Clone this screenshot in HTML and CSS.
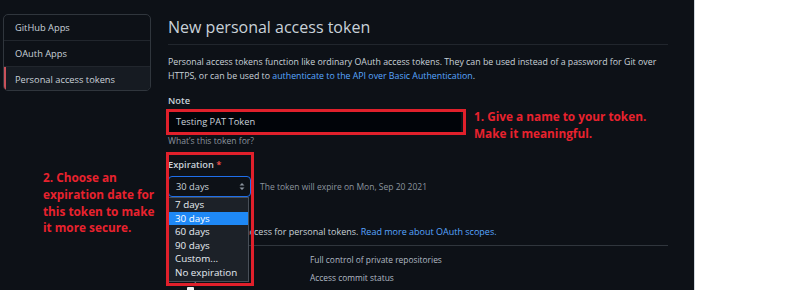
FILE: index.html
```html
<!DOCTYPE html>
<html lang="en">
<head>
  <meta charset="UTF-8" />
  <title>New personal access token</title>
  <link rel="stylesheet" href="styles.css">
</head>
<body>
  <div class="screen">
    <div class="layout">
      <nav class="menu">
        <a class="menu-item">GitHub Apps</a>
        <a class="menu-item">OAuth Apps</a>
        <a class="menu-item selected">Personal access tokens</a>
      </nav>

      <main class="content">
        <h1 class="title">New personal access token</h1>
        <p class="intro">
          Personal access tokens function like ordinary OAuth access tokens. They can be used instead of a password for Git over
          HTTPS, or can be used to <a href="#">authenticate to the API over Basic Authentication</a>.
        </p>

        <label class="field-label">Note</label>
        <div class="text-input">Testing PAT Token</div>
        <p class="hint">What’s this token for?</p>

        <label class="field-label expiration-label">Expiration <span class="required">*</span></label>
        <div class="expiry-row">
          <div class="select">
            <span>30 days</span>
            <svg class="select-arrow" width="6" height="9" viewBox="0 0 6 9">
              <path d="M0.5 3.5 L3 1 L5.5 3.5 Z M0.5 5.5 L3 8 L5.5 5.5 Z" fill="#8b949e"/>
            </svg>
          </div>
          <span class="expiry-note">The token will expire on Mon, Sep 20 2021</span>
        </div>

        <p class="scopes-intro">
          Scopes define the access for personal tokens. <a href="#">Read more about OAuth scopes.</a>
        </p>
        <div class="scopes">
          <div class="scope-row">
            <span class="scope-name">repo</span>
            <span class="scope-desc">Full control of private repositories</span>
          </div>
          <div class="scope-row">
            <span class="scope-name">repo:status</span>
            <span class="scope-desc">Access commit status</span>
          </div>
          <div class="scope-row short">
            <span class="checkbox"></span>
          </div>
        </div>
      </main>
    </div>

    <!-- open dropdown of the select -->
    <ul class="dropdown">
      <li>7 days</li>
      <li class="active">30 days</li>
      <li>60 days</li>
      <li>90 days</li>
      <li>Custom...</li>
      <li>No expiration</li>
    </ul>

    <!-- annotations -->
    <div class="mark mark-note"></div>
    <div class="mark mark-expiry"></div>
    <div class="callout callout-note">1. Give a name to your token.<br>Make it meaningful.</div>
    <div class="callout callout-expiry">2. Choose an<br>expiration date for<br>this token to make<br>it more secure.</div>
  </div>
  <div class="blank"></div>
</body>
</html>
```

FILE: styles.css
```css
body {
  margin: 0;
  display: flex;
  height: 290px;
  overflow: hidden;
  font-family: 'Open Sans', 'Noto Sans', sans-serif;
  background: #fff;
}

.screen {
  position: relative;
  width: 694px;
  height: 290px;
  background: #0d1117;
  color: #c9d1d9;
  overflow: hidden;
}
.blank {
  flex: 1;
  border-left: 1px solid #d0d7de;
  background: #fff;
}

.layout {
  display: flex;
  padding: 14px 0 0 3px;
}

/* side menu */
.menu {
  width: 146px;
  height: 75px;
  border: 1px solid #30363d;
  border-radius: 5px;
  display: flex;
  flex-direction: column;
  overflow: hidden;
}
.menu-item {
  height: 25px;
  line-height: 25px;
  padding-left: 11px;
  font-size: 9.3px;
  color: #c9d1d9;
  border-bottom: 1px solid #21262d;
}
.menu-item:last-child {
  border-bottom: 0;
}
.menu-item.selected {
  background: #161b22;
  box-shadow: inset 2px 0 0 #c9515a;
}

/* main form */
.content {
  margin-left: 17px;
  width: 500px;
}
.title {
  margin: 2px 0 0;
  font-size: 16px;
  font-weight: 400;
  line-height: 22px;
  padding-bottom: 6px;
  border-bottom: 1px solid #21262d;
  color: #c9d1d9;
}
.intro {
  margin: 10px 0 0;
  font-size: 8.8px;
  line-height: 14px;
}
a {
  color: #58a6ff;
  text-decoration: none;
}
.field-label {
  display: block;
  margin-top: 11px;
  font-size: 9.3px;
  font-weight: 600;
  line-height: 13px;
}
.text-input {
  margin-top: 4px;
  height: 21px;
  line-height: 21px;
  padding-left: 8px;
  width: 285px;
  background: #010409;
  font-size: 9.3px;
  color: #c9d1d9;
}
.hint {
  margin: 3px 0 0;
  font-size: 8.6px;
  line-height: 12px;
  color: #8b949e;
}
.expiration-label {
  margin-top: 12px;
  line-height: 12px;
}
.required {
  color: #f85149;
}
.expiry-row {
  display: flex;
  align-items: center;
  margin-top: 5px;
  gap: 9px;
}
.select {
  height: 19px;
  border: 1px solid #1f6feb;
  border-radius: 4px;
  display: flex;
  align-items: center;
  justify-content: space-between;
  padding: 0 5px 0 7px;
  box-sizing: content-box;
  width: 69px;
  font-size: 9.3px;
  color: #c9d1d9;
}
.expiry-note {
  font-size: 8.5px;
  color: #8b949e;
}

.scopes-intro {
  margin: 28px 0 0;
  font-size: 9px;
  line-height: 14px;
}
.scopes {
  margin-top: 6px;
  border-top: 1px solid #30363d;
}
.scope-row {
  display: flex;
  height: 18px;
  align-items: center;
  font-size: 8.4px;
  color: #b1bac4;
}
.scope-row:first-child {
  margin-top: 4px;
}
.scope-row.short {
  height: 8px;
  align-items: flex-start;
}
.scope-name {
  width: 124px;
  padding-left: 18px;
}
.checkbox {
  margin: 1px 0 0 19px;
  width: 7px;
  height: 7px;
  background: #f0f0f0;
  border-radius: 1px;
}

/* open select list */
.dropdown {
  position: absolute;
  left: 168px;
  top: 197px;
  width: 79px;
  height: 83px;
  margin: 0;
  padding: 0;
  list-style: none;
  background: #1c2128;
  border: 1px solid #484f58;
  font-size: 9.8px;
  color: #e6edf3;
}
.dropdown li {
  height: 13.5px;
  line-height: 13.5px;
  padding-left: 6px;
}
.dropdown li.active {
  background: #1e88f5;
  color: #fff;
}

/* red annotation boxes and notes */
.mark {
  position: absolute;
  border: 3px solid #e0202b;
  box-sizing: border-box;
}
.mark-note {
  left: 166px;
  top: 109px;
  width: 300px;
  height: 26px;
}
.mark-expiry {
  left: 166px;
  top: 152px;
  width: 88px;
  height: 134px;
}
.callout {
  position: absolute;
  font-size: 11.8px;
  font-weight: 700;
  line-height: 16.8px;
  color: #e8222e;
}
.callout-note {
  left: 474px;
  top: 108px;
}
.callout-expiry {
  left: 43px;
  top: 169px;
}
```
